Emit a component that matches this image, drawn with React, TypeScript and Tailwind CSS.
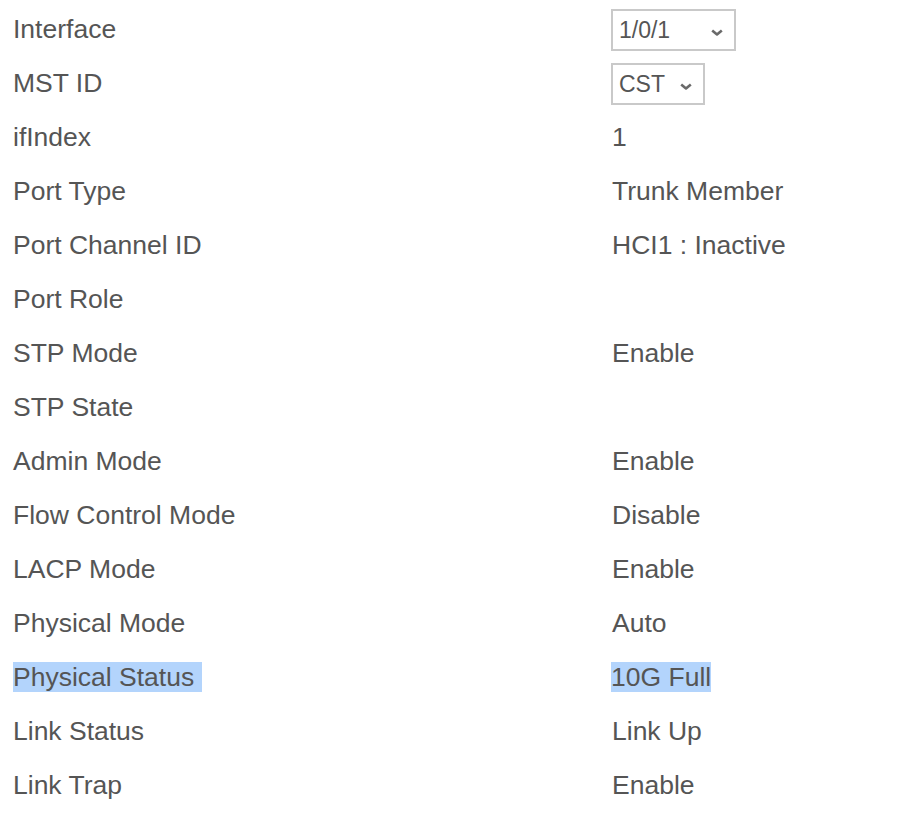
import React from "react";

type Row = {
    label: string;
    value?: string;
    select?: { text: string; width: string };
    highlight?: boolean;
};

const rows: Row[] = [
    { label: "Interface", select: { text: "1/0/1", width: "w-[125px]" } },
    { label: "MST ID", select: { text: "CST", width: "w-[94px]" } },
    { label: "ifIndex", value: "1" },
    { label: "Port Type", value: "Trunk Member" },
    { label: "Port Channel ID", value: "HCI1 : Inactive" },
    { label: "Port Role" },
    { label: "STP Mode", value: "Enable" },
    { label: "STP State" },
    { label: "Admin Mode", value: "Enable" },
    { label: "Flow Control Mode", value: "Disable" },
    { label: "LACP Mode", value: "Enable" },
    { label: "Physical Mode", value: "Auto" },
    { label: "Physical Status", value: "10G Full", highlight: true },
    { label: "Link Status", value: "Link Up" },
    { label: "Link Trap", value: "Enable" },
];

// small flat "v" like the native select arrow
function Chevron() {
    return (
        <svg width="12" height="7" viewBox="0 0 12 7" fill="none">
            <path d="M1.2 1.4 L6 5.4 L10.8 1.4" stroke="#6a6a6a" strokeWidth="2.6" strokeLinejoin="round" />
        </svg>
    );
}

function FakeSelect({ text, width }: { text: string; width: string }) {
    return (
        <div
            className={`${width} h-[42px] border-2 border-[#c9c9c9] bg-white flex items-center justify-between pl-[6px] pr-[11px] text-[23px] text-[#555555]`}
        >
            <span>{text}</span>
            <span className="mt-[5px] flex">
                <Chevron />
            </span>
        </div>
    );
}

export default function App() {
    return (
        <div
            className="w-[912px] h-[818px] bg-white pt-[3px] text-[#555555] text-[26.5px]"
            style={{ fontFamily: '"Liberation Sans", Arial, Helvetica, sans-serif' }}
        >
            {rows.map((row) => (
                <div key={row.label} className="flex h-[54px] items-center">
                    <div className="w-[611px] pl-[13px]">
                        {row.highlight ? (
                            <span className="bg-[#b3d4fc]">{row.label}{"\u00a0"}</span>
                        ) : (
                            row.label
                        )}
                    </div>
                    <div className="flex-1">
                        {row.select ? (
                            <FakeSelect text={row.select.text} width={row.select.width} />
                        ) : row.value ? (
                            row.highlight ? (
                                <span className="bg-[#b3d4fc]">{row.value}</span>
                            ) : (
                                <span className="pl-[1px]">{row.value}</span>
                            )
                        ) : null}
                    </div>
                </div>
            ))}
        </div>
    );
}
